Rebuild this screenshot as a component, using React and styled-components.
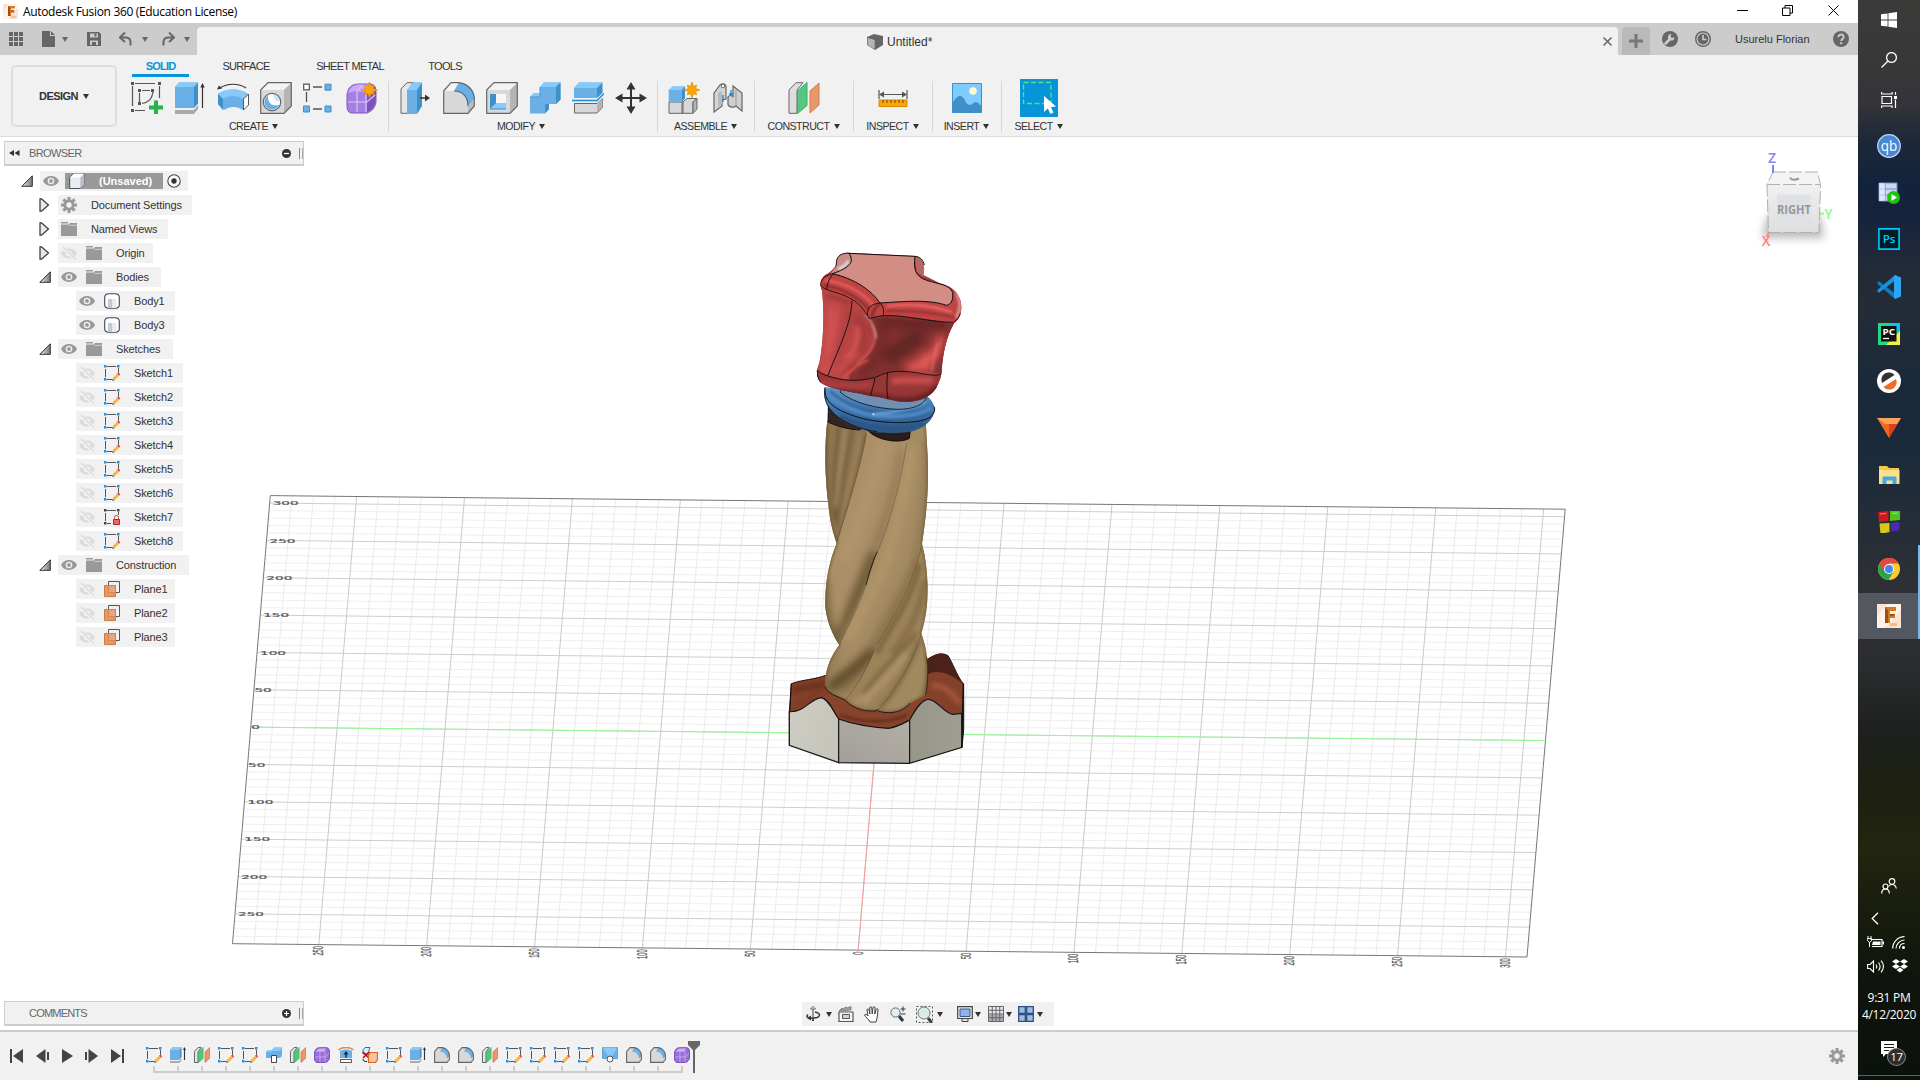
import React from "react";
import styled, { createGlobalStyle, css } from "styled-components";

const Global = createGlobalStyle`
  * { box-sizing: border-box; }
  body { margin: 0; overflow: hidden; background: #fff; font-family: "Liberation Sans", Arial, sans-serif; }
  svg { display: block; flex: none; }
`;

/* ---------- shared ---------- */
const Screen = styled.div`
  display: flex;
  width: 1920px;
  height: 1080px;
`;
const Window = styled.div`
  display: flex;
  flex-direction: column;
  width: 1858px;
  height: 1080px;
`;
const Caret = styled.i`
  display: block;
  flex: none;
  width: 0;
  height: 0;
  border: ${(p) => (p.$s || 3.5)}px solid transparent;
  border-top: 5px solid ${(p) => p.$c || "#333"};
  border-bottom: 0;
`;
const Cell = styled.div`
  display: flex;
  align-items: center;
  justify-content: center;
  flex: none;
  width: ${(p) => p.$w}px;
  margin-left: ${(p) => p.$ml || 0}px;
`;

/* ---------- title bar ---------- */
const TitleBar = styled.header`
  display: flex;
  align-items: center;
  height: 23px;
  padding-left: 3px;
  background: #fff;
`;
const Title = styled.span`
  flex: 1;
  padding-left: 5px;
  font: 12px/22px "Open Sans", "Noto Sans", sans-serif;
  letter-spacing: -0.33px;
  white-space: nowrap;
  color: #000;
`;
const Controls = styled.div`
  display: flex;
  padding: 0 2px 3px 0;
`;

/* ---------- document tab strip ---------- */
const TabStrip = styled.div`
  display: flex;
  align-items: flex-end;
  height: 32px;
  background: #ccc;
`;
const Quick = styled.div`
  display: flex;
  align-items: center;
  width: 197px;
  height: 32px;
`;
const DocTab = styled.div`
  display: flex;
  align-items: center;
  width: 1421px;
  height: 28px;
  border-radius: 4px 4px 0 0;
  background: #f1f1f1;
  color: #333;
  font-size: 12px;
`;
const DocName = styled.div`
  display: flex;
  flex: 1;
  align-items: center;
  gap: 4px;
  padding: 1px 0 0 670px;
`;
const NewTab = styled.div`
  display: flex;
  align-items: center;
  justify-content: center;
  width: 28px;
  height: 28px;
  margin-left: 4px;
  border-radius: 4px 4px 0 0;
  background: #b9b9b9;
`;
const Account = styled.div`
  display: flex;
  flex: 1;
  align-items: center;
  height: 32px;
  padding-left: 12px;
  font-size: 11px;
  color: #333;
`;
const UserName = styled.span`
  width: 122px;
  padding-left: 24px;
  white-space: nowrap;
`;

/* ---------- ribbon ---------- */
const Ribbon = styled.div`
  display: flex;
  height: 82px;
  background: #f1f1f1;
  border-bottom: 1px solid #dcdcdc;
`;
const Workspace = styled.div`
  display: flex;
  align-items: center;
  justify-content: center;
  gap: 5px;
  width: 106px;
  height: 62px;
  margin: 10px 0 0 11px;
  border: 2px solid #dedede;
  border-radius: 5px;
  font-size: 11px;
  font-weight: bold;
  letter-spacing: -0.55px;
  color: #333;
`;
const RibbonBody = styled.div`
  display: flex;
  flex-direction: column;
`;
const RibbonTabs = styled.div`
  display: flex;
  height: 22px;
  padding-left: 15px;
`;
const RibbonTab = styled.div`
  width: ${(p) => p.$w}px;
  height: 22px;
  margin-left: ${(p) => p.$ml || 0}px;
  text-align: center;
  font-size: 11px;
  line-height: 23px;
  letter-spacing: -0.7px;
  white-space: nowrap;
  color: #333;
  ${(p) =>
    p.$active &&
    css`
      color: #0696d7;
      font-weight: bold;
      letter-spacing: -0.8px;
      border-bottom: 3px solid #0696d7;
    `}
`;
const Groups = styled.div`
  display: flex;
  padding-left: 4px;
`;
const Group = styled.div`
  position: relative;
  display: flex;
  flex-direction: column;
  align-items: center;
  width: ${(p) => p.$w}px;
  height: 58px;
  &:not(:first-child)::before {
    content: "";
    position: absolute;
    left: 0;
    top: 4px;
    width: 1px;
    height: 51px;
    background: #d6d6d6;
  }
`;
const Tools = styled.div`
  display: flex;
  align-items: center;
  height: 40px;
  margin-top: 2px;
  padding-left: ${(p) => p.$pl || 0}px;
`;
const GroupLabel = styled.div`
  display: flex;
  align-items: center;
  gap: 4px;
  height: 18px;
  margin-right: ${(p) => p.$mr || 0}px;
  font-size: 10.6px;
  letter-spacing: -0.5px;
  color: #333;
`;
const SelectTool = styled.div`
  display: flex;
  width: 38px;
  height: 38px;
  background: #0696d7;
`;

/* ---------- canvas ---------- */
const Viewport = styled.main`
  position: relative;
  height: 893px;
  background: #fff;
`;
const Scene = styled.svg`
  position: absolute;
  inset: 0;
`;
const PanelBar = styled.div`
  display: flex;
  align-items: center;
  width: 300px;
  height: 25px;
  border: 1px solid #ccc;
  border-bottom-width: 2px;
  background: #f1f1f1;
  font-size: 11px;
  color: #666;
`;
const PanelTitle = styled.span`
  flex: 1;
  letter-spacing: ${(p) => p.$ls}px;
`;
const Grip = styled.i`
  width: 4px;
  height: 11px;
  margin-left: 8px;
  border-left: 1px solid #888;
  border-right: 1px solid #aaa;
`;
const BrowserPanel = styled.aside`
  position: absolute;
  left: 4px;
  top: 4px;
  display: flex;
  flex-direction: column;
`;
const CommentsPanel = styled.aside`
  position: absolute;
  left: 4px;
  bottom: 4px;
`;
const Tree = styled.div`
  display: flex;
  flex-direction: column;
  gap: 4px;
  padding-top: 5px;
`;
const Node = styled.div`
  display: flex;
  align-items: center;
  height: 20px;
  padding-left: ${(p) => 16 + p.$level * 18}px;
`;
const Twist = styled.div`
  width: 20px;
  padding-left: ${(p) => (p.$shift ? 1 : 0)}px;
`;
const NodeBody = styled.div`
  display: flex;
  align-items: center;
  width: ${(p) => p.$w}px;
  height: 20px;
  background: #f1f1f1;
  font-size: 11px;
  letter-spacing: -0.12px;
  color: #333;
  white-space: nowrap;
`;
const Slot = styled.div`
  display: flex;
  justify-content: center;
  width: 22px;
  margin-right: 3px;
`;
const NodeText = styled.span`
  padding-left: 8px;
`;
const Root = styled.div`
  display: flex;
  align-items: center;
  width: 98px;
  height: 16px;
  margin-right: 4px;
  padding-left: 4px;
  gap: 14px;
  background: #999;
  color: #fff;
  font-weight: bold;
  letter-spacing: 0;
`;
const NavBar = styled.div`
  position: absolute;
  left: 802px;
  top: 865px;
  display: flex;
  align-items: center;
  width: 252px;
  height: 24px;
  background: #f1f1f1;
`;

/* ---------- timeline ---------- */
const Timeline = styled.footer`
  display: flex;
  height: 50px;
  border-top: 2px solid #ccc;
  background: #f1f1f1;
`;
const Playback = styled.div`
  display: flex;
  align-items: center;
  width: 142px;
  height: 48px;
  padding-left: 4px;
`;
const Features = styled.div`
  display: flex;
  padding-top: 15px;
`;
const Feature = styled.div`
  display: flex;
  flex-direction: column;
  align-items: center;
  width: 24px;
`;
const Tick = styled.i`
  display: flex;
  width: 24px;
  height: 7px;
  margin-top: 3px;
  background:
    linear-gradient(#ccc, #ccc) 11px 0 / 2px 5px no-repeat,
    linear-gradient(#ccc, #ccc) ${(p) => (p.$first ? "11px" : "0")} 5px / ${(p) => (p.$last ? "13px" : "24px")} 2px no-repeat;
`;
const Marker = styled.div`
  flex: 1;
  margin-left: -6px;
  padding-top: 9px;
`;
const Settings = styled.div`
  display: flex;
  align-items: center;
  width: 29px;
  height: 48px;
`;

/* ---------- taskbar ---------- */
const Taskbar = styled.aside`
  display: flex;
  flex-direction: column;
  width: 62px;
  height: 1080px;
  background: linear-gradient(
    #3b3b3a 0, #383838 60px, #34343a 105px, #1d2838 140px, #13223d 185px, #15233b 215px,
    #232b38 270px, #232c37 320px, #1a293a 380px, #1b2a3a 450px, #232c38 510px, #2d3035 580px,
    #2b2d30 660px, #1c1f1c 740px, #1e210f 800px, #22250f 850px, #1a1e0e 900px, #0f150d 980px, #0b110b 1080px
  );
`;
const TaskItem = styled.div`
  display: flex;
  align-items: center;
  justify-content: center;
  height: ${(p) => p.$h}px;
  border-right: 2px solid ${(p) => (p.$open ? "#76b9ed" : "transparent")};
  padding-left: 2px;
  background: ${(p) => (p.$active ? "#535860" : "transparent")};
`;
const Tray = styled.div`
  display: flex;
  flex-direction: column;
  align-items: center;
  height: 197px;
  margin-top: auto;
  color: #fff;
`;
const TrayRow = styled.div`
  display: flex;
  align-items: center;
  gap: 8px;
  width: 62px;
  height: 24px;
  margin-top: ${(p) => p.$mt || 0}px;
  padding-left: 9px;
`;
const Clock = styled.div`
  margin-top: 11px;
  text-align: center;
  font: 12px/17px "Open Sans", "Noto Sans", sans-serif;
  letter-spacing: -0.3px;
  white-space: nowrap;
`;
const Notice = styled.div`
  position: relative;
  width: 16px;
  height: 16px;
  margin-top: 18px;
`;
const Badge = styled.span`
  position: absolute;
  left: 6px;
  top: 7px;
  width: 19px;
  height: 18px;
  border: 1px solid #888;
  border-radius: 50%;
  background: #2c302c;
  text-align: center;
  font: 11.5px/15px "Open Sans", sans-serif;
  letter-spacing: -0.4px;
`;
const ShowDesktop = styled.i`
  height: 5px;
  border-top: 1px solid #5b675b;
`;

/* ---------- ribbon icons (32 x 32) ---------- */
const Ico = ({ children, s = 32, v = 32, ...r }) => (
  <svg width={s} height={s} viewBox={`0 0 ${v} ${v}`} fill="none" {...r}>
    {children}
  </svg>
);
const B1 = "#6ab0e6", B2 = "#88c9fb", B3 = "#3f8fc9", G1 = "#d8d8d8", GS = "#666";

const Star = ({ x, y, r = 7.5 }) => {
  const pts = Array.from({ length: 16 }, (_, i) => {
    const a = (i * Math.PI) / 8 - Math.PI / 2;
    const q = i % 2 ? r * 0.5 : i % 4 ? r * 0.85 : r;
    return `${x + q * Math.cos(a)},${y + q * Math.sin(a)}`;
  }).join(" ");
  return <polygon points={pts} fill="#fca503" stroke="#d98a00" strokeWidth=".6" />;
};

const icons = {
  sketch: (
    <Ico>
      <path d="M4 1.5h20M1.5 4v20M4 28.5h10M28.5 4v12" stroke="#555" strokeWidth="1.2" />
      <path d="M11 8.5h8M8.5 11v9M22 10c-1 7-4 10-11 11.5" stroke="#555" strokeWidth="1.2" />
      <path d="M0 0h3v3H0zM27 0h3v3h-3zM0 27h3v3H0zM7 7h3v3H7zM20 7h3v3h-3zM7 20h3v3H7z" fill="#555" />
      <path d="M23 18.5h4v5h5v4h-5v5h-4v-5h-5v-4h5z" fill="#28b14c" />
    </Ico>
  ),
  extrude: (
    <Ico>
      <path d="M1 28h19l4-5v4l-4 5H1z" fill="#a9a9a9" />
      <path d="M1 5l4-4.5h19L20 5v21H1z" fill={B1} />
      <path d="M1 5l4-4.5h19L20 5z" fill={B2} />
      <path d="M20 5l4-4.5v21L20 26z" fill={B3} />
      <path d="M28.5 26V4" stroke="#333" strokeWidth="1.2" />
      <path d="M26.3 5.5L28.5 1l2.2 4.5z" fill="#333" />
    </Ico>
  ),
  revolve: (
    <Ico>
      <path d="M1 12C8 6 24 6 31 12v11l-5 5c-6-4-13-4-19 0l-6-6z" fill={B1} />
      <path d="M1 12C8 6 24 6 31 12l-5 5c-6-4-14-4-20 0z" fill={B2} />
      <path d="M1 12l5 5v11l-5-6z" fill={B3} />
      <path d="M31.5 12l-5 5v11l5-5z" fill="#fff" stroke="#555" />
      <path d="M3 6C10 1 22 1 29 6" stroke="#333" strokeWidth="1.2" />
      <path d="M0 7.5l2-4 3 3z" fill="#333" />
    </Ico>
  ),
  hole: (
    <Ico>
      <path d="M.7 8L8 .7h23.300L24 8v23.300H.7z" fill={G1} />
      <path d="M.7 8L8 .7h23.300L24 8z" fill="#f3f3f3" />
      <path d="M24 8l7.300-7.300V24L24 31.300z" fill="#b5b5b5" />
      <path d="M.7 8L8 .7h23.300V24L24 31.300H.7z" stroke={GS} strokeWidth="1.2" />
      <circle cx="12" cy="20" r="8.7" fill="#fff" stroke={GS} strokeWidth="1.2" />
      <path d="M8 13.500c-.5 8 4 11 11 9.500a7.600 7.600 0 1 1-11-9.500z" fill={B1} />
      <path d="M13 12.500a7.600 7.600 0 0 1 6.500 7l-4-1z" fill={B2} opacity=".5" />
    </Ico>
  ),
  pattern: (
    <Ico>
      <path d="M10 5h9M10 27h9M3.500 10v10" stroke="#555" strokeWidth="1.3" />
      <path d="M.7 2.200h5.600v5.600H.7z" fill="#fff" stroke="#555" strokeWidth="1.2" />
      <path d="M22 2.200h6v6h-6zM22 24h6v6h-6zM.5 24h6v6h-6z" fill={B1} stroke={B3} />
    </Ico>
  ),
  form: (
    <Ico>
      <path d="M1 13C2 5 6 2 13 2h12c4 1 5 4 5 9v9c-1 6-4 9-9 11H5c-3-1-4-3-4-7z" fill="#a57fe3" stroke="#8258bf" />
      <path d="M2 11c2-6 6-8.500 12-8.500h9L19 10c-6-1-12-1-17 1z" fill="#c9a9fb" />
      <path d="M21 12l8-8c1 5 2 13-1 20-2 4-4 5-7 6z" fill="#7d52bd" />
      <path d="M2 20h19l8-7M11 10v20M11 10l5-7M20 11v19" stroke="#dcc9fa" strokeWidth="1.1" />
      <Star x={23.5} y={8} r={8} />
    </Ico>
  ),
  presspull: (
    <Ico>
      <path d="M1 7l6-6.300h7v30.600H1z" fill="#e6e6e6" stroke={GS} />
      <path d="M7 8l6-7.500h9L17 8v24H7z" fill={B1} />
      <path d="M7 8l6-7.500h9L17 8z" fill={B2} />
      <path d="M17 8l5-7.500V24l-5 8z" fill={B3} />
      <path d="M20 16h7" stroke="#333" strokeWidth="1.5" />
      <path d="M25 12.500l5 3.500-5 3.500z" fill="#333" />
    </Ico>
  ),
  fillet: (
    <Ico>
      <path d="M.7 9L8 .7h7C26 2 31 9 31.300 17v7L25 31.300H.7z" fill={G1} />
      <path d="M.7 9L8 .7h7L11 9z" fill="#f5f5f5" />
      <path d="M11 9l5-8.300C25 2 31 8 31.500 17L25 24C25 16 20 9 11 9z" fill={B1} />
      <path d="M25 24l6.300-7v7L25 31.300z" fill="#bcbcbc" />
      <path d="M.7 9L8 .7h8C25 2 31 8 31.300 17v7L25 31.300H.7zM25 24c0-9-5-15-14-15" stroke={GS} strokeWidth="1.2" />
    </Ico>
  ),
  shell: (
    <Ico>
      <path d="M.7 8L8 .7h23.300V24L24 31.300H.7z" fill={G1} />
      <path d="M.7 8L8 .7h23.300L24 8z" fill="#f3f3f3" />
      <path d="M24 8l7.300-7.300V24L24 31.300z" fill="#b5b5b5" />
      <path d="M.7 8L8 .7h23.300V24L24 31.300H.7z" stroke={GS} strokeWidth="1.2" />
      <path d="M4 12h16v15H4z" fill="#f6f6f6" />
      <path d="M4 12h6v10l-6 5z" fill={B3} />
      <path d="M4 27l6-6h10v6z" fill={B2} />
      <path d="M4 27h16" stroke={B3} />
    </Ico>
  ),
  combine: (
    <Ico>
      <path d="M1 15l4-4h6V5l4-4.500h16.500v17L27 22h-7v5l-4 4.500H1z" fill={B1} />
      <path d="M11 5l4-4.500h16.500L27 5zM1 15l4-4h6v4z" fill={B2} />
      <path d="M27 5l4.500-4.500v17L27 22zM16 31.500V22h4v5z" fill={B3} />
      <path d="M1 15h10V5" stroke="#4d97d2" />
    </Ico>
  ),
  split: (
    <Ico>
      <path d="M2 6l5-5.500h23.500L25 6v10H2z" fill={B1} />
      <path d="M2 6l5-5.500h23.500L25 6z" fill={B2} />
      <path d="M25 6l5.500-5.500V11L25 16z" fill={B3} />
      <path d="M0 18.500h25l7-7" stroke="#0f8fe0" strokeWidth="1.3" />
      <path d="M2.500 21.500h22.500l5.500-5v9L25 31H2.500z" fill={G1} stroke={GS} />
      <path d="M25 21.500v9l5.500-5v-9z" fill="#b5b5b5" />
    </Ico>
  ),
  move: (
    <Ico>
      <path d="M16 5v22M5 16h22" stroke="#333" strokeWidth="2" />
      <path d="M16 0l4.500 7.500h-9zM16 32l4.500-7.500h-9zM0 16l7.500-4.500v9zM32 16l-7.500-4.500v9z" fill="#333" />
    </Ico>
  ),
  component: (
    <Ico>
      <path d="M1 20h14v11.300H1zM15 20l4-3.500h10L25 20v11.300H14V20z" fill={G1} stroke={GS} />
      <path d="M25 20l4-3.500V27l-4 4.300z" fill="#b5b5b5" stroke={GS} />
      <path d="M.7 8l4-3.500H17V16l-3 4H.7z" fill={B1} />
      <path d="M.7 8l4-3.500H17L14 8z" fill={B2} />
      <path d="M14 8l3-3.500V16l-3 4z" fill={B3} />
      <Star x={24} y={8} r={8} />
    </Ico>
  ),
  joint: (
    <Ico>
      <path d="M2 11L8 3c3-2 6-1 6 2v12l-4 1v6l-8 6z" fill="#d5d5d5" stroke={GS} strokeWidth="1.2" />
      <path d="M6 11v14l4-3V9z" fill="#b9b9b9" />
      <circle cx="11" cy="4" r="1.8" fill="#fff" stroke={GS} />
      <path d="M16 15c1-2 4-2 5 0V4l9 7v18l-6-5c-3 2-8 1-8-2z" fill="#cfcfcf" stroke={GS} strokeWidth="1.2" />
      <path d="M24 8v16" stroke="#999" />
      <path d="M11 13v7M19 8v6M17 12h4" stroke="#1784d8" strokeWidth="1.3" />
    </Ico>
  ),
  construct: (
    <Ico>
      <path d="M1 8l7-7.300h7L9 8v23.300H1z" fill="#dedede" stroke={GS} />
      <path d="M9.500 9L19 .5v23l-9.500 8z" fill="#56c780" stroke="#3fa968" />
      <path d="M22 9l9-8v22l-9 8z" fill="#e8996a" stroke="#cf7f4e" />
    </Ico>
  ),
  inspect: (
    <Ico>
      <path d="M2 8v9M30 8v9M4 12.500h24" stroke="#555" strokeWidth="1.2" />
      <path d="M2 12.500l5-3v6zM30 12.500l-5-3v6z" fill="#555" />
      <path d="M2 18h28v6.500H2z" fill="#fca503" stroke="#d98a00" />
      <path d="M6 18v3M10 18v3M14 18v3M18 18v3M22 18v3M26 18v3" stroke="#5e4a1a" />
    </Ico>
  ),
  insert: (
    <Ico>
      <path d="M1.500 1.500h29v29h-29z" fill="#7fcaff" />
      <path d="M1.500 21c3-5 5-7 8-7 4 0 5 9 9 9 3 0 4-3 6-3 3 0 4 3 6 4v6.500h-29z" fill="#3f8fc9" />
      <path d="M1.500 1.500h29v29h-29z" stroke="#3f8fc9" />
      <circle cx="22" cy="9" r="3.8" fill="#fff9c4" />
    </Ico>
  ),
  select: (
    <svg width="38" height="38" viewBox="0 0 38 38" fill="none">
      <path d="M3.500 3.500h27.500v21h-27.500z" stroke="#62d98b" strokeWidth="1.3" strokeDasharray="5 2.5" />
      <path d="M24 17v16l3.800-3.500 2.700 5.500 3-1.500-2.600-5.300 5.100-.7z" fill="#fff" />
    </svg>
  ),
};

/* ---------- small feature icons (16 x 16) ---------- */
const small = {
  sketch: (
    <Ico s={16} v={16}>
      <path d="M3 1.500h9M1.500 4v8M3 14.500h5M14.500 3v5" stroke="#555" />
      <path d="M0 0h2.500v2.500H0zM13 0h2.500v2.500H13zM0 13h2.500v2.500H0z" fill="#1b8fe6" />
      <path d="M8.500 15.500l1-3.200 4-3.800 2 2-4 4z" fill="#fbb53c" />
      <path d="M13.200 8.600l1.200-1 2 1.800-1.200 1.200z" fill="#f0374b" />
      <path d="M8 16l.8-2.500 1.800 1.700z" fill="#666" />
    </Ico>
  ),
  locked: (
    <Ico s={16} v={16}>
      <path d="M3 1.500h9M1.500 4v8M3 14.500h4M14.500 3v3" stroke="#555" />
      <path d="M0 0h2.500v2.500H0zM13 0h2.500v2.500H13zM0 13h2.500v2.500H0z" fill="#444" />
      <path d="M10.500 10V8.500a2 2 0 0 1 4 0V10" stroke="#d04040" />
      <path d="M9.500 10.500h6v5h-6z" fill="#e26a6a" stroke="#c91f1f" />
    </Ico>
  ),
  extrude: (
    <Ico s={16} v={16}>
      <path d="M0 14h9.500l2-2.500v2L9.500 16H0z" fill="#a9a9a9" />
      <path d="M0 3l2.500-3h9L9.500 3v10H0z" fill={B1} />
      <path d="M0 3l2.500-3h9L9.500 3z" fill={B2} />
      <path d="M9.500 3l2-3v10l-2 3z" fill={B3} />
      <path d="M14.500 13V2" stroke="#333" strokeWidth="1.1" />
      <path d="M12.900 3L14.500 0 16 3z" fill="#333" />
    </Ico>
  ),
  construct: (
    <Ico s={16} v={16}>
      <path d="M.5 4.500l3.500-4h3L4 5v10.500H.5z" fill="#e6e6e6" stroke={GS} />
      <path d="M4.500 5L9 .5v11l-4.500 4z" fill="#56c780" stroke="#3fa968" strokeWidth=".8" />
      <path d="M11 5l4.500-4.500v11L11 15.500z" fill="#e8996a" stroke="#cf7f4e" strokeWidth=".8" />
    </Ico>
  ),
  fillet: (
    <Ico s={16} v={16}>
      <path d="M.6 4.500L4 .6h4C12 1 15.400 4 15.400 9v3.500L13 15.400H.6z" fill={G1} />
      <path d="M6 4.500L8.500.6c4 .6 7 4 6.900 8.400L13 12c0-4.500-3-7.500-7-7.500z" fill={B1} />
      <path d="M.6 4.500L4 .6h4C12 1 15.400 4 15.400 9v3.500L13 15.400H.6z" stroke={GS} strokeWidth="1.1" />
    </Ico>
  ),
  form: (
    <Ico s={16} v={16}>
      <path d="M.5 6C1 2 3 .7 6 .7h6c3 0 3.500 2 3.500 4.500V10c0 3-2 5-4 5.500H4C1.500 15.500.5 14 .5 12z" fill="#9a6ed8" stroke="#7b4fc0" />
      <path d="M2 5c1-2.500 2-3.500 5-3.500h5L10.500 5C7 4.500 4 4.500 2 5z" fill="#caaef5" />
      <path d="M1 10h10l4-3.500M6 5v10M11 5v10" stroke="#c9b0ef" strokeWidth=".8" />
    </Ico>
  ),
  combine: (
    <Ico s={16} v={16}>
      <path d="M0 5l2-2h4l2-2.500h8V9l-2 2H0z" fill={B1} />
      <path d="M0 5l2-2h4v2zM6 3l2-2.500h8L14 4H6z" fill={B2} />
      <path d="M5.500 8.500h5v7h-5z" fill="#fff" stroke="#444" />
    </Ico>
  ),
  offset: (
    <Ico s={16} v={16}>
      <path d="M.5 3c4-3.500 11-3.500 15 0" stroke="#e08a55" strokeWidth="1.5" />
      <path d="M2 4c3-2 9-2 12 0v7H2z" fill={B1} />
      <path d="M8 11V5.500" stroke="#222" strokeWidth="1.3" />
      <path d="M5.500 7.500L8 4l2.500 3.500z" fill="#222" />
      <path d="M2.500 12.500h11v3h-11z" fill="#fff" stroke="#555" />
    </Ico>
  ),
  remove: (
    <Ico s={16} v={16}>
      <path d="M1 3l2-2.500h5L7 3v4H1z" fill="#dcecfa" stroke="#1b77c9" />
      <path d="M1 5l6 6M7 5l-6 6" stroke="#c00" strokeWidth="1.6" />
      <path d="M6.500 8l2-2.500h7v7l-2 3h-7z" fill="#f7c49c" stroke="#d2691e" strokeWidth="1.2" />
      <path d="M1 12c0 2 1 2.500 4 2.500" stroke="#222" />
    </Ico>
  ),
  loft: (
    <Ico s={16} v={16}>
      <path d="M.5.5h15v11H12L8 8l-4 3.500H.5z" fill={B1} stroke={B3} strokeWidth=".7" />
      <path d="M.5.5h15L10 9H6z" fill={B2} />
      <circle cx="8" cy="12" r="3" fill="#fff" stroke="#555" />
    </Ico>
  ),
  plane: (
    <Ico s={16} v={16}>
      <path d="M4.500.5h11v11h-11z" stroke="#555" />
      <path d="M.5 4.500h11v11H.5z" fill="#e8975f" stroke="#cc7d45" />
      <path d="M4.500 4.500h7v7h-7z" fill="#e3a883" stroke="#cc7d45" strokeWidth=".7" />
    </Ico>
  ),
  body: (
    <Ico s={16} v={16}>
      <path d="M.7 4.500C.7 2 2.500.7 5 .7h6c2.500 0 4.300 1.300 4.300 3.800v7c0 2.500-1.800 3.800-4.300 3.800H5C2.500 15.300.7 14 .7 11.500z" fill="#fff" stroke="#3c4654" strokeWidth="1.1" />
      <path d="M4 6h4v9H5c-1 0-1-1-1-2z" fill="#c3c9d2" />
      <path d="M8 6h4v9H8z" fill="#e6e9ee" />
    </Ico>
  ),
  gear: (
    <Ico s={16} v={16}>
      <circle cx="8" cy="8" r="4.2" stroke="#999" strokeWidth="3" />
      <g stroke="#999" strokeWidth="3">
        {[0, 45, 90, 135].map((a) => (
          <path key={a} d="M8 0v3.500M8 12.500V16" transform={`rotate(${a} 8 8)`} />
        ))}
      </g>
    </Ico>
  ),
  folder: (
    <svg width="16" height="14" viewBox="0 0 16 14">
      <path d="M0 0h7v1.500H0zM0 2.500h7.500L9 1h7v13H0z" fill="#999" />
      <path d="M8 3.300h8" stroke="#f1f1f1" strokeWidth=".6" />
    </svg>
  ),
  eye: (
    <svg width="16" height="12" viewBox="0 0 16 12">
      <path d="M0 6C3-.8 13-.8 16 6c-3 6.500-13 6.500-16 0z" fill="#999" />
      <circle cx="8" cy="6" r="3.3" fill="#f1f1f1" />
      <circle cx="8" cy="6" r="1.9" fill="#999" />
    </svg>
  ),
  hidden: (
    <svg width="16" height="13" viewBox="0 0 16 13" fill="none">
      <path d="M0 6.500C3-.3 13-.3 16 6.500c-3 6.500-13 6.500-16 0z" fill="#dcdcdc" />
      <circle cx="8" cy="6.500" r="3" fill="#f1f1f1" />
      <circle cx="8" cy="6.500" r="1.6" fill="#dcdcdc" />
      <path d="M1 .5l14 12" stroke="#f1f1f1" strokeWidth="3.2" />
      <path d="M2 0l13 12.500" stroke="#dcdcdc" strokeWidth="1.5" />
    </svg>
  ),
  root: (
    <Ico s={16} v={16}>
      <path d="M.7 4.500l4-4h10.600v11l-4 4H.7z" fill="#e9ecf1" stroke="#4a4f58" />
      <path d="M11.300 4.500v11l4-4V.5z" fill="#b9bec8" />
      <path d="M1 4.500l4-4h10l-4 4z" fill="#fff" />
    </Ico>
  ),
};

const Expanded = () => (
  <svg width="12" height="12" viewBox="0 0 12 12">
    <defs>
      <linearGradient id="tw">
        <stop offset="0" stopColor="#eee" />
        <stop offset="1" stopColor="#777" />
      </linearGradient>
    </defs>
    <path d="M.8 11.300L11.300.8v10.500z" fill="url(#tw)" stroke="#333" />
  </svg>
);
const Collapsed = () => (
  <svg width="11" height="14" viewBox="0 0 11 14">
    <path d="M1 .8h1.500L9.500 7l-7 6.200H1z" fill="#e6e8ec" stroke="#333" strokeWidth="1.2" />
  </svg>
);

/* ---------- data ---------- */
const groups = [
  { name: "CREATE", w: 267, pitch: 43, pl: 0, mr: 2, tools: ["sketch", "extrude", "revolve", "hole", "pattern", "form"] },
  { name: "MODIFY", w: 269, pitch: 43, pl: 2, mr: 3, tools: ["presspull", "fillet", "shell", "combine", "split", "move"] },
  { name: "ASSEMBLE", w: 97, pitch: 44, tools: ["component", "joint"] },
  { name: "CONSTRUCT", w: 99, pitch: 43, tools: ["construct"] },
  { name: "INSPECT", w: 79, pitch: 43, tools: ["inspect"] },
  { name: "INSERT", w: 69, pitch: 43, tools: ["insert"] },
  { name: "SELECT", w: 75, pitch: 38, tools: ["select"] },
];
const tree = [
  { t: "Document Settings", lv: 1, open: false, ic: ["gear"], w: 134 },
  { t: "Named Views", lv: 1, open: false, ic: ["folder"], w: 110 },
  { t: "Origin", lv: 1, open: false, ic: ["hidden", "folder"], w: 95 },
  { t: "Bodies", lv: 1, open: true, ic: ["eye", "folder"], w: 103 },
  { t: "Body1", lv: 2, ic: ["eye", "body"], w: 99 },
  { t: "Body3", lv: 2, ic: ["eye", "body"], w: 99 },
  { t: "Sketches", lv: 1, open: true, ic: ["eye", "folder"], w: 115 },
  ...[1, 2, 3, 4, 5, 6, 7, 8].map((n) => ({ t: `Sketch${n}`, lv: 2, ic: ["hidden", n === 7 ? "locked" : "sketch"], w: 107 })),
  { t: "Construction", lv: 1, open: true, ic: ["eye", "folder"], w: 131 },
  ...[1, 2, 3].map((n) => ({ t: `Plane${n}`, lv: 2, ic: ["hidden", "plane"], w: 99 })),
];
const features = (
  "sketch extrude construct sketch sketch combine construct form offset remove sketch extrude " +
  "fillet fillet construct sketch sketch sketch sketch loft fillet fillet form"
).split(" ");

/* ---------- ground grid ---------- */
const TL = [270.3, 495.6], TR = [1565.2, 509.2], BL = [232.5, 943.7], BR = [1527, 957];
const at = (u, v) => [0, 1].map((k) => (1 - v) * ((1 - u) * TL[k] + u * TR[k]) + v * ((1 - u) * BL[k] + u * BR[k]));
const seg = (a, b) => `M${a[0].toFixed(2)} ${a[1].toFixed(2)}L${b[0].toFixed(2)} ${b[1].toFixed(2)}`;
const lines = Array.from({ length: 59 }, (_, i) => i + 1);
const isMajorCol = (i) => (i - 29) % 5 === 0;
const isMajorRow = (i) => (i - 31) % 5 === 0;
const col = (i) => seg(at(i / 60, 0), at(i / 60, 1));
const row = (i) => seg(at(0, i / 60), at(1, i / 60));

const Grid = () => (
  <g fill="none">
    <path d={lines.filter((i) => !isMajorRow(i)).map(row).join("")} stroke="#efefef" />
    <path d={lines.filter((i) => !isMajorCol(i)).map(col).join("")} stroke="#ebebeb" />
    <path d={lines.filter(isMajorRow).map(row).join("")} stroke="#cecece" />
    <path d={lines.filter(isMajorCol).map(col).join("")} stroke="#cacaca" />
    <path d={`${seg(TL, TR)}${seg(TR, BR)}${seg(BR, BL)}${seg(BL, TL)}`} stroke="#777" />
    <path d={row(31)} stroke="#93fb93" />
    <path d={seg(at(29 / 60, 31 / 60), at(29 / 60, 1))} stroke="#fb9a9a" />
    <g fill="#555" stroke="#555" strokeWidth=".3" fontFamily="DejaVu Sans, sans-serif" fontSize="10">
      {[300, 250, 200, 150, 100, 50, 0, 50, 100, 150, 200, 250].map((n, i) => {
        const p = at(0, (1 + i * 5) / 60);
        return (
          <text key={i} transform={`translate(${p[0] + (n >= 100 ? 3 : 0.5)} ${p[1] + 2.1}) scale(1.36 .52)`}>
            {n}
          </text>
        );
      })}
    </g>
    <g fill="#555" stroke="#555" strokeWidth=".3" fontFamily="Liberation Sans, sans-serif" fontSize="15" textAnchor="end">
      {[250, 200, 150, 100, 50, 0, 50, 100, 150, 200, 250, 300].map((n, i) => {
        const p = at((4 + i * 5) / 60, 1);
        return (
          <text key={i} transform={`translate(${p[0] + 4.5} ${p[1] + 1.5}) scale(1 .38) rotate(-90)`}>
            {n}
          </text>
        );
      })}
    </g>
  </g>
);

/* ---------- hammer-shaped model ---------- */
const headOutline =
  "M205 68C180 68 168 82 168 100C168 112 150 128 135 135C122 145 118 165 126 182C134 250 130 340 118 400C108 420 110 440 120 456C150 480 220 485 272 498C310 500 340 516 380 516C430 514 462 495 474 462C484 440 482 440 485 425C488 370 500 320 522 280C545 262 548 230 540 208C530 180 505 165 480 160L430 135C436 112 432 82 405 78Z";
const handleOutline =
  "M202 0C193 80 195 180 205 250C210 310 220 340 230 370C205 430 195 490 196 560C200 600 215 640 238 675C215 705 192 750 197 800C202 820 230 828 255 840C280 868 320 876 350 872C400 885 430 872 450 850L495 825C505 780 505 740 500 710C498 680 490 660 484 640C500 590 505 540 502 480C500 430 492 395 486 372C500 280 507 200 503 110L497 0Z";

const Model = () => (
  <g>
    <defs>
      <clipPath id="head"><path d={headOutline} /></clipPath>
      <clipPath id="handle"><path d={handleOutline} /></clipPath>
      <filter id="b6" x="-50%" y="-50%" width="200%" height="200%"><feGaussianBlur stdDeviation="6" /></filter>
      <filter id="b12" x="-50%" y="-50%" width="200%" height="200%"><feGaussianBlur stdDeviation="12" /></filter>
      <filter id="b3" x="-50%" y="-50%" width="200%" height="200%"><feGaussianBlur stdDeviation="3" /></filter>
      <linearGradient id="wood" x1="0" x2="1"><stop offset="0" stopColor="#92784f" /><stop offset=".5" stopColor="#ab9069" /><stop offset="1" stopColor="#9a805a" /></linearGradient>
      <linearGradient id="fL" x1="0" x2="1" y1="0" y2=".3"><stop offset="0" stopColor="#cdcdc5" /><stop offset="1" stopColor="#c5c5bb" /></linearGradient>
      <linearGradient id="fM" x1="0" x2="1" y1="1" y2="0"><stop offset="0" stopColor="#a39e9b" /><stop offset="1" stopColor="#b3afa5" /></linearGradient>
      <linearGradient id="fR" x1="0" x2="1"><stop offset="0" stopColor="#979689" /><stop offset="1" stopColor="#a09e93" /></linearGradient>
      <linearGradient id="ring" x1="0" x2="0" y1="0" y2="1"><stop offset="0" stopColor="#6197cf" /><stop offset=".5" stopColor="#3a6fa9" /><stop offset="1" stopColor="#2c5885" /></linearGradient>
    </defs>

    <g transform="translate(760 420) scale(.33333)">
      {/* stone base and its leather-brown cap */}
      <path d="M94 791C130 778 160 780 200 765L500 720C530 698 550 698 565 708C585 745 595 775 611 792L611 930L606 982L88 900Z" fill="#84402a" stroke="#1b0f0a" strokeWidth="3" />
      <path d="M500 720C530 698 550 698 565 708C585 745 595 775 611 792C570 760 530 745 500 765Z" fill="#4a221a" />
      <g filter="url(#b6)">
        <path d="M100 810C140 800 170 800 195 790" stroke="#6a311e" strokeWidth="18" fill="none" />
        <path d="M105 855C150 845 180 800 198 810" stroke="#7c3a23" strokeWidth="12" fill="none" />
        <path d="M515 800C540 790 570 810 600 850" stroke="#a4563a" strokeWidth="16" fill="none" />
        <path d="M240 870C300 905 380 905 440 870" stroke="#8a452c" strokeWidth="22" fill="none" />
      </g>
      <path d="M94 791L88 876V976" stroke="#1b0f0a" strokeWidth="3" fill="none" />
      <path d="M185 833C205 815 240 830 262 850C290 880 330 885 350 880C400 890 430 875 450 855C470 830 500 820 520 838L449 905C430 918 400 926 380 926C330 922 280 915 236 897Z" fill="#87432c" />
      <path d="M240 885C300 908 390 912 440 885" stroke="#6b3121" strokeWidth="10" fill="none" filter="url(#b3)" />
      <path d="M88 875C135 878 150 835 185 833C208 840 220 875 236 897V1028L88 976Z" fill="url(#fL)" stroke="#151515" strokeWidth="3.5" />
      <path d="M236 897C290 917 340 922 385 925C410 922 430 910 449 900V1030L236 1028Z" fill="url(#fM)" stroke="#151515" strokeWidth="3.5" />
      <path d="M449 900C465 870 485 836 507 838C535 842 550 880 580 883L605 880L606 982L449 1030Z" fill="url(#fR)" stroke="#151515" strokeWidth="3.5" />
      <path d="M610 792L605 982" stroke="#111" strokeWidth="4" />

      {/* twisted handle */}
      <path d={handleOutline} fill="url(#wood)" />
      <g clipPath="url(#handle)">
        <path d="M190 -10H330C300 150 260 260 230 372L190 340Z" fill="#8f754f" />
        <g filter="url(#b6)" fill="none">
          <path d="M238 20C228 120 215 200 225 300" stroke="#6d5735" strokeWidth="9" />
          <path d="M275 30C260 130 240 200 232 320" stroke="#6d5735" strokeWidth="8" />
          <path d="M255 30C242 120 232 200 228 260" stroke="#a58b60" strokeWidth="9" />
          <path d="M303 40C285 140 262 230 240 330" stroke="#a0855c" strokeWidth="9" />
          <path d="M318 40C300 160 262 270 232 372" stroke="#6a5434" strokeWidth="8" />
          <path d="M196 20V300" stroke="#6f5a3a" strokeWidth="9" />
        </g>
        <path d="M442 60C420 200 385 320 350 400C320 490 270 610 236 678C210 640 190 590 194 550C196 480 205 430 230 372C260 270 300 160 322 30Z" fill="#aa8f67" />
        <g filter="url(#b12)" fill="none">
          <path d="M375 60C340 190 290 340 245 420" stroke="#b3956c" strokeWidth="30" />
          <path d="M430 90C410 220 370 320 335 410" stroke="#8d7450" strokeWidth="20" />
          <path d="M345 400C315 480 275 560 245 660" stroke="#6d5936" strokeWidth="38" />
          <path d="M196 480C192 560 205 620 236 672" stroke="#6e5936" strokeWidth="18" />
        </g>
        <path d="M442 60C420 200 385 320 350 400C320 500 270 610 236 678C205 715 190 760 196 810L255 842C290 800 325 740 352 672C390 600 450 520 486 372C500 280 507 200 503 110L497 0H450Z" fill="#a58b63" />
        <g filter="url(#b12)" fill="none">
          <path d="M455 80C440 210 410 320 380 420C350 500 300 590 260 660" stroke="#b3966a" strokeWidth="28" />
          <path d="M500 60C505 200 490 320 470 400" stroke="#84704c" strokeWidth="14" />
          <path d="M480 400C450 490 400 570 350 660C320 730 280 790 240 820" stroke="#86704a" strokeWidth="26" />
          <path d="M205 810C230 780 300 740 340 690" stroke="#5d4928" strokeWidth="32" />
          <path d="M232 700C210 730 198 760 198 800" stroke="#8a7048" strokeWidth="14" />
        </g>
        <path d="M486 372C450 500 400 590 352 672C325 750 285 810 255 842L300 880L355 872C400 810 450 740 484 640C505 560 510 450 486 372Z" fill="#9c8259" />
        <g filter="url(#b6)" fill="none">
          <path d="M478 430C455 540 390 620 350 700" stroke="#7c6641" strokeWidth="16" />
          <path d="M495 480C480 580 440 650 395 700" stroke="#8a7149" strokeWidth="22" />
          <path d="M470 640C420 700 360 750 310 820" stroke="#7d6642" strokeWidth="12" />
          <path d="M440 700C400 760 350 800 310 850" stroke="#ab9167" strokeWidth="20" />
          <path d="M280 850C310 830 340 810 360 800" stroke="#ac9168" strokeWidth="12" />
        </g>
        <path d="M484 640C450 740 400 815 350 874L400 890L500 840V680Z" fill="#a1885f" />
        <g filter="url(#b6)" fill="none">
          <path d="M478 660C450 740 400 820 360 865" stroke="#7f6a46" strokeWidth="13" />
          <path d="M502 700C508 760 500 800 490 830" stroke="#7f6a46" strokeWidth="11" />
        </g>
        <g fill="none" stroke="#4f3f23" strokeWidth="1.6">
          <path d="M352 395C335 430 325 470 318 495" stroke="#1c160c" strokeWidth="2.8" />
          <path d="M440 70C420 200 385 320 352 395M318 495C300 550 260 630 236 678M484 380C465 470 420 560 352 672M340 690C325 740 290 800 255 842M484 640C460 730 400 820 352 872M320 40C300 150 262 260 230 372" opacity=".75" />
        </g>
        <path d={handleOutline} fill="none" stroke="#6a5634" strokeWidth="9" opacity=".6" filter="url(#b3)" />
      </g>
      <path d="M196 800C200 820 230 828 255 840C280 868 320 876 350 872C352 866 352 868 356 874C400 885 430 872 450 850" fill="none" stroke="#111" strokeWidth="2.6" />

      <path d="M497 825C505 780 505 740 500 710" fill="none" stroke="#2b2112" strokeWidth="2.5" />
    </g>

    <g transform="translate(780 230) scale(.33333)">
      {/* collar */}
      <path d="M145 530C146 550 142 565 146 577C180 592 210 598 238 600L300 560Z" fill="#33261c" stroke="#0c0c0c" strokeWidth="3" />
      <path d="M262 600C290 632 360 642 388 625L391 600Z" fill="#2b1c18" stroke="#0c0c0c" strokeWidth="3" />
      <path d="M135 472C128 500 140 520 148 535C180 580 240 598 280 606C330 612 370 610 400 603C440 590 462 565 464 540C464 520 450 505 440 497L300 480Z" fill="url(#ring)" />
      <g filter="url(#b3)" fill="none">
        <path d="M140 485C170 530 260 560 350 560C400 558 440 548 455 535" stroke="#5089c6" strokeWidth="15" />
        <path d="M150 482C190 520 250 545 300 550" stroke="#2f5f92" strokeWidth="6" />
        <path d="M300 568C370 570 420 562 452 545" stroke="#2f5f92" strokeWidth="5" />
        <path d="M280 552C340 548 400 540 440 515" stroke="#7fb1e2" strokeWidth="4" />
        <path d="M180 560C260 600 360 605 430 580" stroke="#2c5685" strokeWidth="14" />
      </g>
      <path d="M180 486C220 520 290 535 350 538C400 538 435 525 440 498L380 470L200 460Z" fill="#7090b3" stroke="#0c1420" strokeWidth="2.5" />
      <path d="M135 472C128 520 180 548 250 566C330 585 430 580 452 560C465 548 465 540 463 530M135 478C131 505 140 522 148 535C175 575 240 598 290 605" fill="none" stroke="#0b1119" strokeWidth="3" />
      <circle cx="280" cy="553" r="3" fill="#cfe4f7" />

      {/* head */}
      <path d={headOutline} fill="#a83c3c" />
      <g clipPath="url(#head)">
        <path d="M120 170C180 185 230 220 268 265C310 320 280 400 200 455L100 440Z" fill="#bd4646" />
        <path d="M268 262L530 280L485 430C400 420 330 420 270 445C200 470 190 440 240 400C300 350 290 300 268 262Z" fill="#853030" />
        <g filter="url(#b12)" fill="none">
          <path d="M160 230C155 310 150 370 135 430" stroke="#dc5757" strokeWidth="22" />
          <path d="M230 250C270 320 250 370 200 430" stroke="#a03838" strokeWidth="30" />
          <path d="M205 230C205 290 180 350 150 400" stroke="#a83a3a" strokeWidth="16" />
          <path d="M290 270C320 330 320 370 240 435" stroke="#762929" strokeWidth="36" />
          <path d="M300 275L500 285" stroke="#6a2626" strokeWidth="38" />
          <path d="M320 390C360 350 400 340 420 310" stroke="#602522" strokeWidth="46" />
          <path d="M490 320C480 360 450 405 380 415" stroke="#e85b59" strokeWidth="30" />
          <path d="M435 370L440 425" stroke="#e65a58" strokeWidth="30" />
        </g>
        <g filter="url(#b6)" fill="none">
          <path d="M232 290C238 340 222 372 195 384" stroke="#de5c5c" strokeWidth="10" />
          <path d="M175 420C200 400 225 385 240 370" stroke="#d65252" strokeWidth="8" />
          <path d="M140 195C170 205 195 208 212 222" stroke="#8f3131" strokeWidth="8" />
        </g>
        <g filter="url(#b3)" fill="none">
          <path d="M500 300C490 350 480 390 478 425" stroke="#8b3030" strokeWidth="5" />
          <path d="M470 340C465 370 460 400 455 425" stroke="#f08080" strokeWidth="3" />
          <path d="M275 285C295 330 285 360 230 400" stroke="#d25a58" strokeWidth="6" />
          <path d="M255 255C275 270 288 300 290 325" stroke="#c9a09b" strokeWidth="4" />
          <path d="M190 445C210 420 240 400 265 390" stroke="#d65252" strokeWidth="6" />
        </g>
        {/* lower rolled edge */}
        <path d="M112 422C150 447 230 460 285 444C310 430 330 420 400 428C450 436 470 440 486 430L470 520H100Z" fill="#973636" />
        <g filter="url(#b6)" fill="none">
          <path d="M120 455C170 470 230 470 275 462" stroke="#b64242" strokeWidth="12" />
          <path d="M335 455C380 445 430 455 460 450" stroke="#cc4d4d" strokeWidth="20" />
          <path d="M130 480C220 487 300 507 380 512C440 505 460 490 474 465" stroke="#561e1e" strokeWidth="14" />
        </g>
        {/* upper rolled edges */}
        <path d="M150 132C220 145 275 180 300 218C400 208 450 212 500 226C522 220 522 200 517 178L560 200L550 270L520 280C450 268 380 258 310 256L268 266C240 225 190 190 118 178L120 140Z" fill="#c24343" />
        <g filter="url(#b3)" fill="none">
          <path d="M135 150C200 160 250 190 280 225" stroke="#e86765" strokeWidth="6" />
          <path d="M130 165C190 175 240 205 268 240" stroke="#7c2a2a" strokeWidth="6" />
          <path d="M320 228C400 220 450 226 515 246" stroke="#ea6a68" strokeWidth="7" />
          <path d="M320 244C400 240 460 250 525 262" stroke="#8d3030" strokeWidth="6" />
          <path d="M528 190C545 215 540 245 528 262" stroke="#d99a96" strokeWidth="8" />
          <path d="M275 262C278 240 288 228 300 222" stroke="#6e2525" strokeWidth="6" />
        </g>
        <path d="M205 68C175 68 165 90 170 108L150 132C190 120 215 110 214 88Z" fill="#c98c86" />
        <path d="M175 118C195 108 205 100 203 92" stroke="#d9dcdc" strokeWidth="10" filter="url(#b3)" fill="none" />
        <path d="M405 79C435 80 440 110 430 140L410 125Z" fill="#b86864" />
        <path d="M425 100V138" stroke="#ccc4c2" strokeWidth="9" filter="url(#b3)" />
      </g>
      <path d="M205 70L405 79C400 115 405 140 440 151C480 163 510 165 518 188C520 208 515 222 500 226C450 210 400 212 300 219C275 180 220 145 158 131C190 120 216 105 214 88C213 78 210 72 205 70Z" fill="#d28d85" stroke="#101010" strokeWidth="3" />
      <g fill="none" stroke="#101010" strokeWidth="2.8">
        <path d="M205 69C175 70 168 85 169 106M405 79C420 80 430 90 433 105" />
        <path d="M160 131C145 150 140 165 141 180M158 131C130 138 122 150 122 167C140 185 175 185 210 205C240 220 252 240 268 266C300 255 330 254 380 261C430 268 480 277 520 277C532 270 538 262 541 250" />
        <path d="M300 219C312 232 312 245 310 257M300 219C272 222 260 235 263 255" />
        <path d="M216 212C214 280 180 345 143 438" />
        <path d="M112 420C120 432 150 442 190 449C240 455 280 446 305 434C330 422 370 422 410 428C450 435 475 440 484 430M112 420C112 440 115 450 124 457" />
        <path d="M285 444C283 460 275 480 272 498M323 428C319 460 321 490 324 508" />
      </g>
    </g>
  </g>
);

const ViewCube = () => (
  <g>
    <defs>
      <filter id="sh" x="-30%" y="-50%" width="160%" height="220%"><feGaussianBlur stdDeviation="4" /></filter>
      <linearGradient id="cf" x1="0" x2="0" y1="0" y2="1"><stop offset="0" stopColor="#f0f0f0" /><stop offset="1" stopColor="#dedede" /></linearGradient>
    </defs>
    <path d="M1768 215H1820L1824 238H1762Z" fill="#888" opacity=".6" filter="url(#sh)" />
    <path d="M1773 172H1817.500L1820.500 184.500H1767Z" fill="#f4f4f4" />
    <path d="M1767 184.500H1820.500L1819 232.500H1768.500Z" fill="url(#cf)" />
    <path d="M1777 194.500H1810.500V224H1777Z" fill="#dfe1e4" />
    <path d="M1773 172H1817.500L1820.500 184.500L1819 232.500H1768.500L1767 184.500ZM1767 184.500H1820.500" fill="none" stroke="#b0b0b0" strokeDasharray="13 3" />
    <path d="M1790 177.500c1 2.500 5 3 9 1" stroke="#999" strokeWidth="2" fill="none" />
    <g fontFamily="Open Sans, sans-serif" textAnchor="middle">
      <text x="1794" y="214.3" fontSize="13" fontWeight="700" fill="#94989d" textLength="34" lengthAdjust="spacingAndGlyphs">RIGHT</text>
      <g fontSize="14" fontWeight="600">
        <text x="1772" y="163" fill="#8484ff">Z</text>
        <text x="1766" y="246" fill="#ff8080">X</text>
        <text x="1828.5" y="218.5" fill="#8cf98c">Y</text>
      </g>
    </g>
    <path d="M1773 165v8" stroke="#8484ff" strokeWidth="2" />
    <path d="M1820 213.500h4" stroke="#8cf98c" strokeWidth="2" />
    <path d="M1769 232l-2 5" stroke="#ff8080" strokeWidth="2" />
  </g>
);

/* ---------- navigation bar ---------- */
const nav = [
  { w: 22, el: <Ico s={16} v={16}><path d="M8 1v14" stroke="#333" strokeWidth="2" /><path d="M8 2.500v11" stroke="#fff" /><path d="M5.500 3L8 .2 10.500 3z" fill="#fff" stroke="#333" strokeWidth=".7" /><path d="M3 8.500C-1 12 7 13 12 11.500c4-1.500 3-4.500-2-5.500" stroke="#333" strokeWidth="1.4" /><path d="M6 9.500L2 12l4 2.500z" fill="#333" /></Ico> },
  { w: 10 },
  { w: 24, el: <Ico s={16} v={16}><path d="M1 6h14v9.500H1z" fill="#f6f6f6" stroke="#555" strokeWidth="1.2" /><path d="M4.500 8.500h7v4h-7z" fill="#cfd4da" stroke="#555" /><path d="M1 5l3-3 1 1 3-2 1 1 4-1.500V4z" fill="#9aa0a6" stroke="#666" strokeWidth=".7" /></Ico> },
  { w: 28, el: <Ico s={17} v={17}><path d="M6 16c-1-3-5-5-5.500-7C1 7.500 3 8.500 4 10L3 4c0-1.500 1.800-1.500 2 0l.8 4V2c0-1.700 2-1.700 2 0l.4 6L9 1.800c.2-1.500 2-1.500 2 0L10.800 8l1.400-4.500c.5-1.500 2-1 1.800.5C13.500 8 13.500 12 12 16z" fill="#fff" stroke="#444" /></Ico> },
  { w: 24, el: <Ico s={16} v={16}><circle cx="5.5" cy="6.5" r="4.6" fill="#dfeeee" stroke="#667" /><path d="M9 10l4 5" stroke="#2f3440" strokeWidth="3" /><path d="M10.500 3h5M13 .5v5M10.500 8h5" stroke="#333" /></Ico> },
  { w: 28, el: <Ico s={17} v={17}><path d="M.5.5h16v16H.5z" stroke="#555" strokeDasharray="2 2" /><circle cx="8" cy="7" r="6" fill="#d9ebe9" stroke="#777" /><path d="M12 12l3.500 4.500" stroke="#3b414a" strokeWidth="3" /></Ico> },
  { w: 4 },
  { w: 26, ml: 10, el: <Ico s={16} v={16}><path d="M.7.7h14.600v11.800H.7z" fill="#eee" stroke="#444" strokeWidth="1.2" /><path d="M3 3h10v7.500H3z" fill="#8fb4e3" stroke="#36588c" /><path d="M5 13v2.500h6V13" fill="#ddd" stroke="#444" /></Ico> },
  { w: 0 },
  { w: 18, ml: 9, el: <Ico s={16} v={16}><path d="M.5.5h15v15H.5z" fill="#e6e8eb" /><path d="M.5 8.500h15v7H.5z" fill="#a9aeb6" /><path d="M.5.500h15v15H.5zM4.250.5v15M8 .5v15M11.750.5v15M.5 4.250h15M.5 8h15M.5 11.750h15" stroke="#666" /></Ico> },
  { w: 8 },
  { w: 26, el: <Ico s={16} v={16}><path d="M.7.7h6.600v6.600H.7zM8.700.7h6.600v6.600H8.700zM.7 8.700h6.600v6.600H.7zM8.700 8.700h6.600v6.600H8.700z" fill="#9dbde8" stroke="#2f4d7c" strokeWidth="1.3" /></Ico> },
  { w: 2 },
];

/* ---------- taskbar icons ---------- */
const FusionLogo = ({ s }) => (
  <svg width={s} height={s} viewBox="0 0 24 24">
    <path d="M0 0h24v24H0z" fill="#fbe3cf" />
    <path d="M0 12L10 0h14v6L8 24H0z" fill="#fff3e8" />
    <path d="M8 3h11v4h-6v3h5v4h-5v5H8z" fill="#d07a28" />
    <path d="M8 3l3 3v13H8zM13 10h5l-2 2h-3z" fill="#9b4f12" />
    <path d="M13 19h7v3h-7z" fill="#f3b98c" />
  </svg>
);
const tasks = [
  { h: 40, el: <Ico s={16} v={16}><path d="M0 2.300L6.600 1.400v6.200H0zM7.400 1.300L16 0v7.600H7.400zM0 8.400h6.600v6.200L0 13.700zM7.400 8.400H16V16l-8.600-1.300z" fill="#fff" /></Ico> },
  { h: 40, el: <Ico s={16} v={16}><circle cx="10.5" cy="5.5" r="4.9" stroke="#fff" strokeWidth="1.3" /><path d="M7 9L.5 15.500" stroke="#fff" strokeWidth="1.3" /></Ico> },
  { h: 39, el: <Ico s={16} v={16}><path d="M1 4.500h9.500v7H1zM.6 0v2h10.500V0M.6 16v-2h10.500v2M14.500 0v3M14.500 7.500V16" stroke="#fff" strokeWidth="1.2" /><path d="M13 4h3v3h-3z" fill="#fff" /></Ico> },
  { h: 53, el: (
    <Ico s={24} v={24}><circle cx="12" cy="12" r="11.3" fill="#4688d4" stroke="#c7dcf3" strokeWidth="1.2" />
      <text x="12" y="16.500" textAnchor="middle" fontFamily="Open Sans, sans-serif" fontSize="14.5" fill="#fff" textLength="16.5" lengthAdjust="spacingAndGlyphs">qb</text></Ico>) },
  { h: 41, el: (
    <Ico s={22} v={22}><path d="M1 1h18v18H1z" fill="#c9d9f3" /><path d="M1 1h18v18H1zM7 1v18M1 7h18M1 13h18" stroke="#6f8fc9" /><path d="M1 1h6v18H1z" fill="#e9f0fb" opacity=".6" />
      <circle cx="15.5" cy="15.5" r="6.5" fill="#1fc40c" /><path d="M13.500 12l5.500 3.500-5.500 3.500z" fill="#fff" /></Ico>) },
  { h: 51, el: (
    <Ico s={22} v={22}><path d="M.9.900h20.200v20.200H.9z" fill="#001d26" stroke="#00c8ff" strokeWidth="1.6" />
      <text x="11" y="15.200" textAnchor="middle" fontFamily="Open Sans, sans-serif" fontWeight="600" fontSize="11.5" fill="#00c8ff">Ps</text></Ico>) },
  { h: 46, el: <Ico s={24} v={24}><path d="M0 8l2-1.700L18 18.500V24L1 9.500z" fill="#0c7bc4" /><path d="M0 16l2 1.700L18 5.500V0L1 14.500z" fill="#1f90de" /><path d="M18 0l6 2.500v19L18 24l-1-2V2z" fill="#2aa6f5" /></Ico> },
  { h: 47, el: (
    <Ico s={22} v={22}><path d="M0 0h22v22H0z" fill="#21d789" /><path d="M10 0h12v12z" fill="#07c3f2" /><path d="M22 8v14H8z" fill="#f4ee4a" /><path d="M3 3h15.500v15.500H3z" fill="#111" />
      <text x="4.500" y="11.500" fontFamily="Open Sans, sans-serif" fontWeight="700" fontSize="9" fill="#fff" textLength="12.5" lengthAdjust="spacingAndGlyphs">PC</text><path d="M5 15.500h6" stroke="#fff" strokeWidth="1.3" /></Ico>) },
  { h: 47, el: <Ico s={24} v={24}><circle cx="12" cy="12" r="12" fill="#fff" /><path d="M5 14A7.500 7.500 0 0 1 17.500 6z" fill="#333" /><path d="M19 10A7.500 7.500 0 0 1 6.500 18z" fill="#ef6c23" /></Ico> },
  { h: 47, el: <Ico s={24} v={24}><path d="M0 2h24L12 22z" fill="#f26a21" /><path d="M0 2h24l-4 6H8z" fill="#f9a25a" /><path d="M12 22V8h8z" fill="#d9411e" /></Ico> },
  { h: 47, el: <Ico s={22} v={22}><path d="M1 2h8l2 2h10v15H1z" fill="#f5c945" /><path d="M1 6h20.500v14H1z" fill="#ffe08a" /><path d="M4.500 20v-6c0-1 .5-1.500 1.500-1.500h11c1 0 1.500.5 1.500 1.500v6h-4v-3.500h-6V20z" fill="#41a9e6" /></Ico> },
  { h: 47, el: <Ico s={22} v={22}><path d="M0 1l10.500-1v10L1 11z" fill="#c91b1b" /><path d="M12 0h10v9l-10 1z" fill="#4cc41e" /><path d="M1.500 12.500l10-.5v9l-9 2z" fill="#d6c71a" /><path d="M13 11.500l8.500-.5v8.500L13 20.500z" fill="#4a2ab0" /><path d="M2 3l6-.5M14 2.500l6-.5" stroke="#fff" opacity=".5" /></Ico> },
  { h: 48, open: true, el: (
    <Ico s={22} v={22}><circle cx="11" cy="11" r="11" fill="#fccb2e" /><path d="M11 11L1.500 5.500A11 11 0 0 0 10.500 22L15.500 13.500z" fill="#2ba24c" /><path d="M1.500 5.500A11 11 0 0 1 20.600 5.600H11l-4.800 8.200z" fill="#df4a3c" />
      <circle cx="11" cy="11" r="5" fill="#fff" /><circle cx="11" cy="11" r="4" fill="#4688f1" /></Ico>) },
  { h: 46, open: true, active: true, el: <FusionLogo s={24} /> },
];

const play = [
  ["M1 0v14", "M13 0v14L3 7z"],
  ["M13 3v8", "M10.5 0v14L1 7z"],
  ["", "M2 0v14L13 7z"],
  ["M1 3v8", "M3.5 0v14L13 7z"],
  ["M13 0v14", "M1 0v14l10-7z"],
];

export default function App() {
  return (
    <Screen>
      <Global />
      <Window>
        <TitleBar>
          <FusionLogo s={15} />
          <Title>Autodesk Fusion 360 (Education License)</Title>
          <Controls>
            <Cell $w={45}><Ico s={11} v={11}><path d="M0 5.500h11" stroke="#000" /></Ico></Cell>
            <Cell $w={45}><Ico s={11} v={11}><path d="M.5 3h7.500v7.500H.5zM3 3V.5h7.500V8H8" stroke="#000" /></Ico></Cell>
            <Cell $w={46}><Ico s={11} v={11}><path d="M.5.5l10 10M10.500.5l-10 10" stroke="#000" /></Ico></Cell>
          </Controls>
        </TitleBar>

        <TabStrip>
          <Quick>
            <Cell $w={14} $ml={9}>
              <Ico s={14} v={14}><path d="M0 0h4v4H0zM5 0h4v4H5zM10 0h4v4h-4zM0 5h4v4H0zM5 5h4v4H5zM10 5h4v4h-4zM0 10h4v4H0zM5 10h4v4H5zM10 10h4v4h-4z" fill="#666" /></Ico>
            </Cell>
            <Cell $w={13} $ml={19}><svg width="13" height="16" viewBox="0 0 13 16"><path d="M0 0h8v5h5v11H0zM9 0l4 4H9z" fill="#666" /></svg></Cell>
            <Cell $w={7} $ml={6}><Caret $c="#666" /></Cell>
            <Cell $w={14} $ml={19}>
              <Ico s={14} v={14}><path d="M0 0h12l2 2v12H0z" fill="#666" /><path d="M3 1.500h8v4H3zM3 8.500h8V13H3z" fill="#ccc" /><path d="M7.500 1.500h2v3h-2zM5 10h4v4H5z" fill="#666" /></Ico>
            </Cell>
            <Cell $w={14} $ml={18}>
              <Ico s={14} v={14}><path d="M2 5.500h5c4 0 5 3 4.500 8" stroke="#666" strokeWidth="2" /><path d="M6 .5L1 5.500l5 4.500" stroke="#666" strokeWidth="2" /></Ico>
            </Cell>
            <Cell $w={7} $ml={8}><Caret $c="#666" /></Cell>
            <Cell $w={14} $ml={13}>
              <Ico s={14} v={14}><path d="M12 5.500H7C3 5.500 2 8.500 2.500 13.500" stroke="#666" strokeWidth="2" /><path d="M8 .5l5 5L8 10" stroke="#666" strokeWidth="2" /></Ico>
            </Cell>
            <Cell $w={7} $ml={8}><Caret $c="#666" /></Cell>
          </Quick>
          <DocTab>
            <DocName>
              <Ico s={16} v={16}><path d="M0 3l7-3 9 2v9l-8 5-8-5z" fill="#666" /><path d="M.7 4l7 2v9L.7 11z" fill="#b5b5b5" /></Ico>
              Untitled*
            </DocName>
            <Cell $w={22}><Ico s={9} v={9}><path d="M.5.5l8 8M8.500.5l-8 8" stroke="#666" strokeWidth="1.5" /></Ico></Cell>
          </DocTab>
          <NewTab><Ico s={14} v={14}><path d="M7 0v14M0 7h14" stroke="#777" strokeWidth="3" /></Ico></NewTab>
          <Account>
            <Cell $w={16}>
              <Ico s={16} v={16}><circle cx="8" cy="8" r="8" fill="#666" /><path d="M3.500 12.500L8 8" stroke="#ccc" strokeWidth="2.6" strokeLinecap="round" /><path d="M12.500 6.500a3.300 3.300 0 1 1-3-3.500L8.500 5l1 1.800z" fill="#ccc" /></Ico>
            </Cell>
            <Cell $w={16} $ml={17}>
              <Ico s={16} v={16}><circle cx="8" cy="8" r="8" fill="#666" /><circle cx="8" cy="8" r="6" stroke="#ccc" strokeWidth="1.1" /><path d="M8 4v4.500h3.500" stroke="#ccc" strokeWidth="1.6" /></Ico>
            </Cell>
            <UserName>Usurelu Florian</UserName>
            <Ico s={16} v={16}><circle cx="8" cy="8" r="8" fill="#666" /><path d="M5.300 6.200c0-3.700 5.600-3.500 5.400 0C10.600 8 8.200 8 8.200 10" stroke="#ccc" strokeWidth="1.9" /><path d="M7.200 11.200h2v2h-2z" fill="#ccc" /></Ico>
          </Account>
        </TabStrip>

        <Ribbon>
          <Workspace>DESIGN <Caret /></Workspace>
          <RibbonBody>
            <RibbonTabs>
              <RibbonTab $w={57} $active>SOLID</RibbonTab>
              <RibbonTab $w={60} $ml={27}>SURFACE</RibbonTab>
              <RibbonTab $w={80} $ml={34}>SHEET METAL</RibbonTab>
              <RibbonTab $w={50} $ml={30}>TOOLS</RibbonTab>
            </RibbonTabs>
            <Groups>
              {groups.map((g) => (
                <Group key={g.name} $w={g.w}>
                  <Tools $pl={g.pl}>
                    {g.tools.map((t) => (
                      <Cell key={t} $w={g.pitch}>
                        {t === "select" ? <SelectTool>{icons[t]}</SelectTool> : icons[t]}
                      </Cell>
                    ))}
                  </Tools>
                  <GroupLabel $mr={g.mr}>{g.name} <Caret /></GroupLabel>
                </Group>
              ))}
            </Groups>
          </RibbonBody>
        </Ribbon>

        <Viewport>
          <Scene width="1858" height="893" viewBox="0 137 1858 893">
            <Grid />
            <Model />
            <ViewCube />
          </Scene>

          <BrowserPanel>
            <PanelBar>
              <Cell $w={18}><svg width="11" height="6" viewBox="0 0 11 6"><path d="M5 0v6L0 3zM10.500 0v6l-5-3z" fill="#333" /></svg></Cell>
              <Cell $w={6} />
              <PanelTitle $ls={-0.6}>BROWSER</PanelTitle>
              <Ico s={9} v={9}><circle cx="4.5" cy="4.5" r="4.5" fill="#333" /><path d="M2 4.500h5" stroke="#fff" strokeWidth="1.3" /></Ico>
              <Grip />
            </PanelBar>
            <Tree>
              <Node $level={0}>
                <Twist $shift><Expanded /></Twist>
                <NodeBody $w={148}>
                  <Slot>{small.eye}</Slot>
                  <Root>{small.root}(Unsaved)</Root>
                  <Ico s={14} v={14}><circle cx="7" cy="7" r="6.2" fill="#fff" stroke="#444" strokeWidth="1.1" /><circle cx="7" cy="7" r="2.7" fill="#333" /></Ico>
                </NodeBody>
              </Node>
              {tree.map((n) => (
                <Node key={n.t} $level={n.lv}>
                  <Twist $shift>{n.open === true && <Expanded />}{n.open === false && <Collapsed />}</Twist>
                  <NodeBody $w={n.w}>
                    {n.ic.map((k) => <Slot key={k}>{small[k]}</Slot>)}
                    <NodeText>{n.t}</NodeText>
                  </NodeBody>
                </Node>
              ))}
            </Tree>
          </BrowserPanel>

          <CommentsPanel>
            <PanelBar>
              <Cell $w={24} />
              <PanelTitle $ls={-0.8}>COMMENTS</PanelTitle>
              <Ico s={9} v={9}><circle cx="4.5" cy="4.5" r="4.5" fill="#333" /><path d="M2 4.500h5M4.500 2v5" stroke="#fff" strokeWidth="1.2" /></Ico>
              <Grip />
            </PanelBar>
          </CommentsPanel>

          <NavBar>
            {nav.map((n, i) => (
              <Cell key={i} $w={n.w} $ml={n.ml}>{n.el || <Caret $s={3} />}</Cell>
            ))}
          </NavBar>
        </Viewport>

        <Timeline>
          <Playback>
            {play.map(([bar, tri], i) => (
              <Cell key={i} $w={25}>
                <Ico s={14} v={14}>{bar && <path d={bar} stroke="#444" strokeWidth="2" />}<path d={tri} fill="#444" /></Ico>
              </Cell>
            ))}
          </Playback>
          <Features>
            {features.map((f, i) => (
              <Feature key={i}>
                {small[f]}
                <Tick $first={i === 0} $last={i === features.length - 1} />
              </Feature>
            ))}
          </Features>
          <Marker>
            <svg width="12" height="32" viewBox="0 0 12 32"><path d="M0 0h12v4L7 9v23H5V9L0 4z" fill="#666" /></svg>
          </Marker>
          <Settings>{small.gear}</Settings>
        </Timeline>
      </Window>

      <Taskbar>
        {tasks.map((t, i) => (
          <TaskItem key={i} $h={t.h} $open={t.open} $active={t.active}>{t.el}</TaskItem>
        ))}
        <Tray>
          <Ico s={16} v={16}><circle cx="11" cy="3.5" r="2.8" stroke="#fff" strokeWidth="1.2" /><circle cx="4.5" cy="8.5" r="2.5" stroke="#fff" strokeWidth="1.2" /><path d="M.7 15.500c0-6 7.500-6 7.600 0M8 8c3-3 7-1 7.300 2.500" stroke="#fff" strokeWidth="1.2" /></Ico>
          <TrayRow $mt={12}>
            <Cell $w={16}><svg width="8" height="13" viewBox="0 0 8 13" fill="none"><path d="M7 .7L1.200 6.500 7 12.300" stroke="#fff" strokeWidth="1.3" /></svg></Cell>
          </TrayRow>
          <TrayRow>
            <svg width="17" height="12" viewBox="0 0 17 12" fill="none"><path d="M3.500 3.500H15v7H5" stroke="#fff" strokeWidth="1.1" /><path d="M6 5.500h7.500v3.500H5zM15.500 5.500H17v3h-1.500z" fill="#fff" /><path d="M1 0v2.500M4 0v2.500M.3 2.500h4.400v2L2.500 6.500.3 4.500zM2.500 6v5" stroke="#fff" /></svg>
            <Ico s={13} v={13}><path d="M.7 12.500C.7 6 6 .7 12.500.7M4 12.500C4 8 8 4 12.500 4M7.500 12.500c0-3 2-5 5-5" stroke="#fff" strokeWidth="1.2" /><circle cx="11.5" cy="11.5" r="1.5" fill="#fff" /></Ico>
          </TrayRow>
          <TrayRow>
            <svg width="17" height="13" viewBox="0 0 17 13" fill="none"><path d="M.6 4.500h2.500L6.500 1v11L3 8.500H.6zM9 4.500c1 1.300 1 2.700 0 4M11.500 2.500c2 2.500 2 5.500 0 8M14 .7c3 3.500 3 8 0 11.600" stroke="#fff" strokeWidth="1.1" /></svg>
            <svg width="16" height="14" viewBox="0 0 16 14"><path d="M4 0l4 2.500L4 5 0 2.500zM12 0l4 2.500L12 5 8 2.500zM4 5l4 2.500L4 10 0 7.500zM12 5l4 2.500-4 2.500-4-2.500zM8 8.500l3.500 2.500L8 13.500 4.500 11z" fill="#fff" /></svg>
          </TrayRow>
          <Clock>9:31 PM<br />4/12/2020</Clock>
          <Notice>
            <Ico s={16} v={16}><path d="M0 0h16v13H5l-3 3v-3H0z" fill="#fff" /><path d="M3 3.500h10M3 6.500h10M3 9.500h5" stroke="#1a1f1a" /></Ico>
            <Badge>17</Badge>
          </Notice>
        </Tray>
        <ShowDesktop />
      </Taskbar>
    </Screen>
  );
}
